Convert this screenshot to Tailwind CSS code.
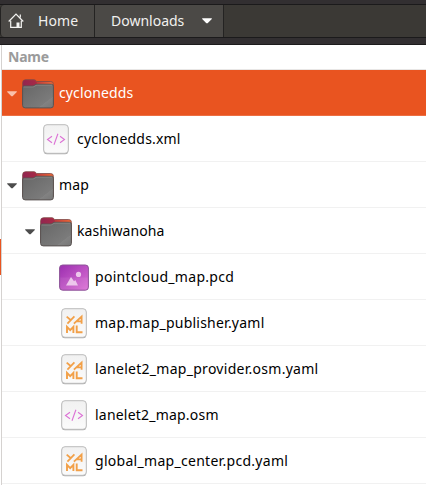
<!DOCTYPE html>
<html lang="en">
<head>
<meta charset="utf-8">
<title>Downloads</title>
<script src="https://cdn.jsdelivr.net/npm/@tailwindcss/browser@4"></script>
</head>
<body class="w-[426px] h-[485px] overflow-hidden bg-white font-['Noto_Sans','Open_Sans',sans-serif] text-[14px] text-black">
<svg width="0" height="0" class="absolute">
  <defs>
    <linearGradient id="fg" x1="0" y1="0" x2="1" y2="1"><stop offset="0" stop-color="#666"/><stop offset=".75" stop-color="#7b7b7b"/><stop offset=".76" stop-color="#828282"/><stop offset="1" stop-color="#777"/></linearGradient>
    <linearGradient id="fb"><stop offset="0" stop-color="#972848"/><stop offset=".4" stop-color="#b9343d"/><stop offset="1" stop-color="#ee6a36"/></linearGradient>
    <linearGradient id="ft"><stop offset="0" stop-color="#912650"/><stop offset="1" stop-color="#a82a45"/></linearGradient>
    <linearGradient id="ig" x1="0" y1="0" x2="1" y2="1"><stop offset="0" stop-color="#9c2fb0"/><stop offset="1" stop-color="#dc72d5"/></linearGradient>
    <linearGradient id="pg" x1="0" y1="0" x2="0" y2="1"><stop offset="0" stop-color="#f1f1f1"/><stop offset="1" stop-color="#fbfbfb"/></linearGradient>
  </defs>
  <symbol id="folder" viewBox="0 0 32 30">
    <path d="M.6 4Q.6.7 3.5.7H12q1.6 0 2.4 1.8h14.3q2.7 0 2.7 2.8v20H.6Z" fill="url(#fb)" stroke="#7d4a48" stroke-width=".8"/>
    <path d="M1.1 4Q1.1 1.2 3.5 1.2H12q1.4 0 2.2 1.9l1 1L11.6 7H1.1Z" fill="url(#ft)"/>
    <path d="M.6 8.7Q.6 7 2.2 7h8.2q1.4 0 2.2-.8l.3-.3q.8-.6 2-.6h14.5q2 0 2 2v19.1q0 2.5-2.7 2.5H3.3Q.6 28.9.6 26.4Z" fill="url(#fg)" stroke="#5a5352" stroke-width="1"/>
    <path d="M1.5 8h9.1q1.5 0 2.5-1.1.9-.7 2.1-.7h15.1" fill="none" stroke="#8e8b8a" stroke-width=".7"/>
  </symbol>
  <symbol id="page" viewBox="0 0 26 31">
    <rect x=".7" y="1.2" width="24.6" height="29" rx="3.3" fill="#aaa"/>
    <rect x=".7" y=".7" width="24.6" height="28.6" rx="3.3" fill="url(#pg)" stroke="#bcbcbc"/>
  </symbol>
  <symbol id="code" viewBox="0 0 26 31">
    <use href="#page"/>
    <path d="M9 12.2 4.5 15.5 9 18.8M17 12.2l4.5 3.3-4.5 3.3M14.9 9.8 11 20.8" fill="none" stroke="#dc72d5" stroke-width="1.1"/>
  </symbol>
  <symbol id="yaml" viewBox="0 0 26 31">
    <use href="#page"/>
    <path d="M5.7 8.6 9.6 12M13.4 8.4 6.4 15.7M12.9 15.7 20.6 8.5v7.3M15.9 13.4h4.7" fill="none" stroke="#f2a048" stroke-width="1.8"/>
    <path d="M6 25v-6.2l3.2 3.3 3.2-3.3V25M15.7 17.6v6.6h5.8" fill="none" stroke="#f2a048" stroke-width="1.9"/>
  </symbol>
  <symbol id="image" viewBox="0 0 30 27">
    <rect x=".6" y="1" width="28.8" height="25.2" rx="3" fill="url(#ig)" stroke="#8c5297"/>
    <path d="M1.2 13.4h27.6v9.5q0 2.7-2.7 2.7H3.9q-2.7 0-2.7-2.7Z" fill="#fff" fill-opacity=".07"/>
    <path d="M7 21.6l5-8.7 3 4.4 1.3-1.3L19 21.6Z" fill="#edc7ec"/><circle cx="19.5" cy="10.4" r="2.6" fill="#edc7ec"/>
  </symbol>
  <symbol id="arrow" viewBox="0 0 10 6"><path d="M.2.3h9.6v.8L5.6 5.3h-1.2L.2 1.1Z" fill="currentColor"/></symbol>
</svg>

<header class="h-[45px] bg-[#322f31] pt-1 border-b border-[#1c1b1c]">
  <nav class="h-[34px] flex border-y border-[#1b1a1b] bg-[#3b3935] text-[#f1f0ee]">
    <div class="w-[95px] flex items-center bg-[#4b4946] border-l border-r border-[#242322] rounded-l-[4px] pl-[7px]">
      <svg width="16" height="16" viewBox="0 0 16 16" fill="none" stroke="#f4f4f2" stroke-width="1.2"><path d="M.7 8.5 8 1.2l7.3 7.3M2.7 7.7v6.7h10.6V7.7M12.3 1.5v3"/><path d="M8.5 9.5h3v5h-3z" fill="#f4f4f2" stroke="none"/></svg>
      <span class="ml-[14px] leading-5 tracking-[0.1px]">Home</span>
    </div>
    <div class="w-[129px] flex items-center bg-[#4b4946] border-r border-[#242322] pl-4">
      <span class="w-[91px] leading-5">Downloads</span>
      <svg width="10" height="6" class="text-white"><use href="#arrow"/></svg>
    </div>
  </nav>
</header>

<main class="flex h-[440px]">
  <aside class="w-px pt-[194px]"><div class="h-9 bg-[#e95420]"></div></aside>
  <section class="flex-1 border-l border-[#d5d2d0]">
    <div class="h-[25px] border-b border-[#e8e6e5] pl-1.5 leading-6 font-bold text-[#9b9b9b] tracking-[-0.2px]">Name</div>
    <ul class="whitespace-nowrap">
      <li class="h-[46px] flex items-center border-b border-[#ec6f43] bg-[#e95420] text-white pl-[5px]">
        <svg width="10" height="6" class="mr-[5px] mt-[3px] text-[#fac0aa]"><use href="#arrow"/></svg>
        <svg width="32" height="30" class="mr-[5px] mt-[3px]"><use href="#folder"/></svg>
        <span class="tracking-[0.13px]">cyclonedds</span></li>
      <li class="h-[46px] flex items-center border-b border-[#f1f1f1] pl-[41px]">
        <svg width="26" height="31" class="mr-2 mt-0.5"><use href="#code"/></svg>
        <span class="tracking-[0.19px]">cyclonedds.xml</span></li>
      <li class="h-[46px] flex items-center border-b border-[#f1f1f1] pl-[5px]">
        <svg width="10" height="6" class="mr-[5px] mt-[3px] text-[#4c4c4c]"><use href="#arrow"/></svg>
        <svg width="32" height="30" class="mr-[5px] mt-[3px]"><use href="#folder"/></svg>
        <span class="tracking-[0.1px]">map</span></li>
      <li class="h-[46px] flex items-center border-b border-[#f1f1f1] pl-[23px]">
        <svg width="10" height="6" class="mr-[5px] mt-[3px] text-[#4c4c4c]"><use href="#arrow"/></svg>
        <svg width="32" height="30" class="mr-[5px] mt-[3px]"><use href="#folder"/></svg>
        <span class="tracking-[0.05px]">kashiwanoha</span></li>
      <li class="h-[46px] flex items-center border-b border-[#f1f1f1] pl-[57px]">
        <svg width="30" height="27" class="mr-1.5 mt-0.5"><use href="#image"/></svg>
        <span class="tracking-[0.29px]">pointcloud_map.pcd</span></li>
      <li class="h-[46px] flex items-center border-b border-[#f1f1f1] pl-[59px]">
        <svg width="26" height="31" class="mr-2 mt-0.5"><use href="#yaml"/></svg>
        <span class="tracking-[0.23px]">map.map_publisher.yaml</span></li>
      <li class="h-[46px] flex items-center border-b border-[#f1f1f1] pl-[59px]">
        <svg width="26" height="31" class="mr-2 mt-0.5"><use href="#yaml"/></svg>
        <span class="tracking-[0.28px]">lanelet2_map_provider.osm.yaml</span></li>
      <li class="h-[46px] flex items-center border-b border-[#f1f1f1] pl-[59px]">
        <svg width="26" height="31" class="mr-2 mt-0.5"><use href="#code"/></svg>
        <span class="tracking-[0.21px]">lanelet2_map.osm</span></li>
      <li class="h-[46px] flex items-center border-b border-[#f1f1f1] pl-[59px]">
        <svg width="26" height="31" class="mr-2 mt-0.5"><use href="#yaml"/></svg>
        <span class="tracking-[0.29px]">global_map_center.pcd.yaml</span></li>
    </ul>
  </section>
</main>
</body>
</html>
